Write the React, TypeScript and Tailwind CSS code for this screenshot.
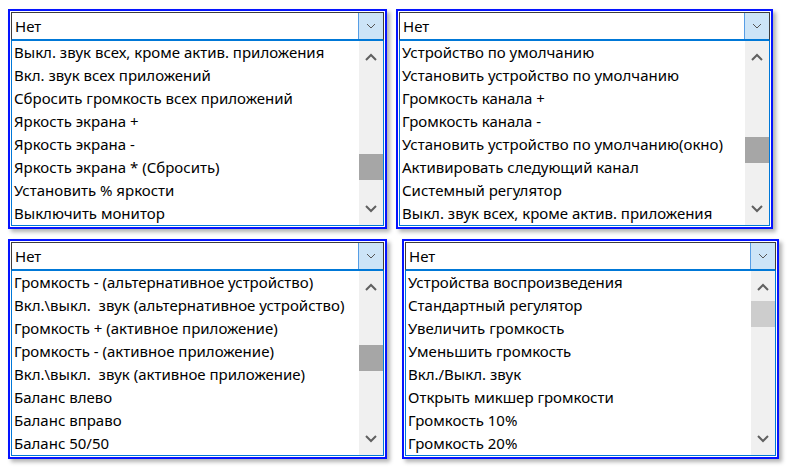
const panels = [
  {
    items: [
      "Выкл. звук всех, кроме актив. приложения",
      "Вкл. звук всех приложений",
      "Сбросить громкость всех приложений",
      "Яркость экрана +",
      "Яркость экрана -",
      "Яркость экрана * (Сбросить)",
      "Установить % яркости",
      "Выключить монитор",
    ],
    thumbTop: 113,
    thumbDark: true,
  },
  {
    items: [
      "Устройство по умолчанию",
      "Установить устройство по умолчанию",
      "Громкость канала +",
      "Громкость канала -",
      "Установить устройство по умолчанию(окно)",
      "Активировать следующий канал",
      "Системный регулятор",
      "Выкл. звук всех, кроме актив. приложения",
    ],
    thumbTop: 96,
    thumbDark: true,
  },
  {
    items: [
      "Громкость - (альтернативное устройство)",
      "Вкл.\\выкл.  звук (альтернативное устройство)",
      "Громкость + (активное приложение)",
      "Громкость - (активное приложение)",
      "Вкл.\\выкл.  звук (активное приложение)",
      "Баланс влево",
      "Баланс вправо",
      "Баланс 50/50",
    ],
    thumbTop: 74,
    thumbDark: true,
  },
  {
    items: [
      "Устройства воспроизведения",
      "Стандартный регулятор",
      "Увеличить громкость",
      "Уменьшить громкость",
      "Вкл./Выкл. звук",
      "Открыть микшер громкости",
      "Громкость 10%",
      "Громкость 20%",
    ],
    thumbTop: 30,
    thumbDark: false,
  },
];

function Chevron({ up }: { up?: boolean }) {
  return (
    <svg width="12" height="8" viewBox="0 0 12 8">
      <path
        d={up ? "M1 7 L6 2 L11 7" : "M1 1 L6 6 L11 1"}
        fill="none"
        stroke="#606060"
        strokeWidth="2"
      />
    </svg>
  );
}

function Combo({ items, thumbTop, thumbDark, width }: { items: string[]; thumbTop: number; thumbDark: boolean; width: string }) {
  return (
    <div
      className={`${width} h-[220px] border-2 border-[#0514ff] bg-white p-px flex flex-col shadow-[3px_3px_4px_rgba(0,0,0,0.3)]`}
    >
      <div className="h-[29px] flex border border-[#3c3c3c] border-b-2 border-b-[#0078d7]">
        <div className="flex-1 flex items-center pl-[3px] text-[15px] text-black">Нет</div>
        <div className="w-[25px] bg-[#cce4f7] border-l border-[#569de5] flex items-center justify-center">
          <svg width="10" height="6" viewBox="0 0 10 6">
            <path d="M1 1 L5 5 L9 1" fill="none" stroke="#555" strokeWidth="1" />
          </svg>
        </div>
      </div>
      <div className="flex-1 flex border border-t-0 border-[#0078d7] overflow-hidden">
        <div className="flex-1 flex flex-col pl-[2px]">
          {items.map((t) => (
            <div key={t} className="h-[23px] flex items-center text-[15px] text-black whitespace-pre leading-none">
              {t}
            </div>
          ))}
        </div>
        <div className="w-[24px] bg-[#f0f0f0] relative flex flex-col items-center justify-between py-[12px]">
          <Chevron up />
          <div
            className={`absolute left-0 w-full h-[26px] ${thumbDark ? "bg-[#a6a6a6]" : "bg-[#cdcdcd]"}`}
            style={{ top: thumbTop }}
          />
          <Chevron />
        </div>
      </div>
    </div>
  );
}

export default function App() {
  return (
    <div
      className="w-[794px] h-[471px] bg-white"
      style={{ fontFamily: '"Noto Sans", "Open Sans", sans-serif' }}
    >
      <div className="flex pt-[9px] pl-[8px] gap-[9px]">
        <Combo {...panels[0]} width="w-[379px]" />
        <Combo {...panels[1]} width="w-[377px]" />
      </div>
      <div className="flex pt-[10px] pl-[8px] gap-[15px]">
        <Combo {...panels[2]} width="w-[379px]" />
        <Combo {...panels[3]} width="w-[377px]" />
      </div>
    </div>
  );
}
